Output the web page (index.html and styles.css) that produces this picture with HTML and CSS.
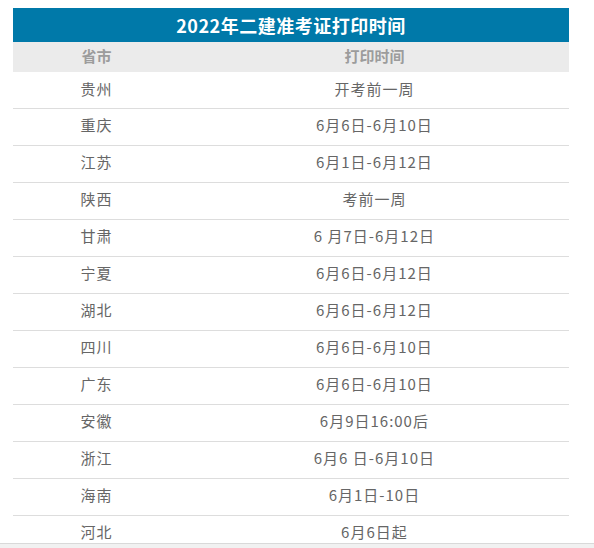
FILE: index.html
```html
<!DOCTYPE html>
<html lang="zh-CN">
<head>
<meta charset="utf-8">
<title>2022年二建准考证打印时间</title>
<link rel="stylesheet" href="styles.css">
</head>
<body>
<div class="wrap">
  <div class="title">2022年二建准考证打印时间</div>
  <table class="tbl">
    <thead>
      <tr><th class="c1">省市</th><th class="c2">打印时间</th></tr>
    </thead>
    <tbody>
      <tr><td>贵州</td><td>开考前一周</td></tr>
      <tr><td>重庆</td><td>6月6日-6月10日</td></tr>
      <tr><td>江苏</td><td>6月1日-6月12日</td></tr>
      <tr><td>陕西</td><td>考前一周</td></tr>
      <tr><td>甘肃</td><td>6 月7日-6月12日</td></tr>
      <tr><td>宁夏</td><td>6月6日-6月12日</td></tr>
      <tr><td>湖北</td><td>6月6日-6月12日</td></tr>
      <tr><td>四川</td><td>6月6日-6月10日</td></tr>
      <tr><td>广东</td><td>6月6日-6月10日</td></tr>
      <tr><td>安徽</td><td>6月9日16:00后</td></tr>
      <tr><td>浙江</td><td>6月6 日-6月10日</td></tr>
      <tr><td>海南</td><td>6月1日-10日</td></tr>
      <tr><td>河北</td><td>6月6日起</td></tr>
    </tbody>
  </table>
</div>
<div class="bottom-bar"></div>
</body>
</html>
```
FILE: styles.css
```css
html, body {
  margin: 0;
  padding: 0;
  background: #fff;
  overflow: hidden;
}
body {
  font-family: "Noto Sans CJK SC", "Noto Sans", sans-serif;
  color: #666;
}
.wrap {
  width: 556px;
  margin: 8px 0 0 13px;
}
.title {
  height: 34px;
  line-height: 34px;
  background: #0079a9;
  color: #fff;
  font-weight: bold;
  font-size: 18px;
  letter-spacing: 0.5px;
  text-align: center;
}
.tbl {
  width: 556px;
  border-collapse: collapse;
  table-layout: fixed;
}
.tbl .c1 { width: 30%; }
.tbl th {
  box-sizing: border-box;
  height: 30px;
  padding: 0 0 2px;
  background: #ebebeb;
  color: #9c9c9c;
  font-size: 15px;
  line-height: 20px;
  font-weight: bold;
  text-align: center;
}
.tbl td {
  box-sizing: border-box;
  height: 37px;
  padding: 0 0 3px;
  font-size: 15px;
  line-height: 20px;
  letter-spacing: 1px;
  text-align: center;
  border-bottom: 1px solid #dddddd;
  white-space: pre;
}
.tbl tbody tr:first-child td {
  height: 36px;
  padding-bottom: 2px;
}
.bottom-bar {
  position: fixed;
  left: 0;
  right: 0;
  bottom: 0;
  height: 4px;
  background: #f1f1f1;
  border-top: 1px solid #d9d9d9;
}
```
